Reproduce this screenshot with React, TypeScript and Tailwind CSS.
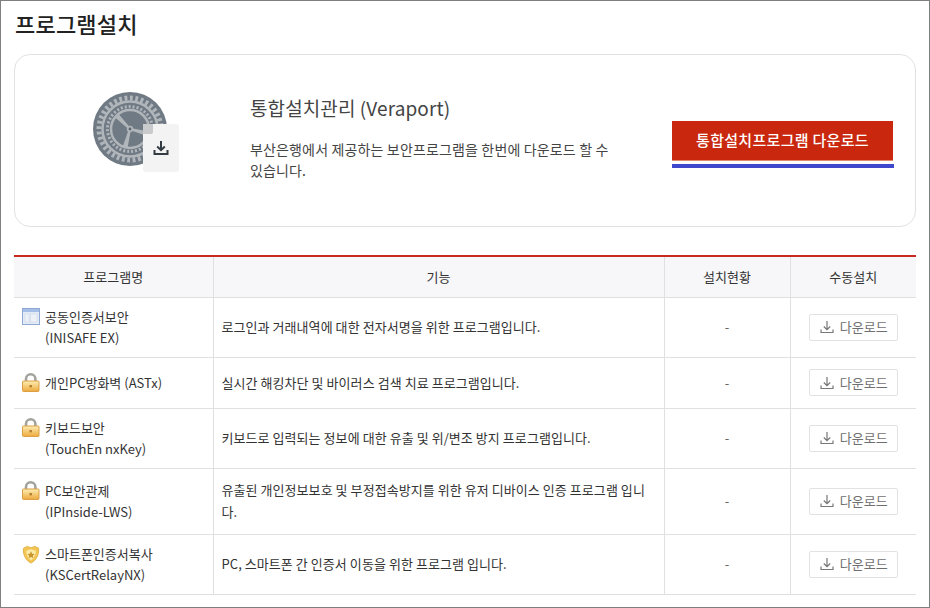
const FONT = "font-['Noto_Sans_CJK_KR','Noto_Sans',sans-serif]"

function WindowIcon() {
  return (
    <svg width="18" height="17" viewBox="0 0 18 17" className="shrink-0">
      <rect x="0.5" y="0.5" width="17" height="16" fill="#e3ebf7" stroke="#8fa9d4" />
      <rect x="1" y="1" width="16" height="3" fill="#a3bfe8" />
      <rect x="3" y="6" width="4" height="8" fill="#eef2f8" stroke="#cdd6e4" strokeWidth="0.6" />
      <rect x="8.5" y="6" width="6.5" height="8" fill="#eef2f8" stroke="#cdd6e4" strokeWidth="0.6" />
    </svg>
  )
}

function LockIcon() {
  return (
    <svg width="18" height="19" viewBox="0 0 18 19" className="shrink-0">
      <defs>
        <linearGradient id="lockBody" x1="0" y1="0" x2="0" y2="1">
          <stop offset="0" stopColor="#fdeeb4" />
          <stop offset="1" stopColor="#eda93c" />
        </linearGradient>
      </defs>
      <path d="M4 9V6a4.7 4.7 0 0 1 9.4 0V9" fill="none" stroke="#a3a39d" strokeWidth="2.6" />
      <rect x="0.5" y="8" width="16.5" height="10.5" rx="1" fill="url(#lockBody)" stroke="#dc9f45" />
      <rect x="7.5" y="12" width="2.4" height="2.4" fill="#b27c2c" />
    </svg>
  )
}

function ShieldIcon() {
  return (
    <svg width="18" height="19" viewBox="0 0 18 20" className="shrink-0">
      <path d="M1 3.5 5 1.5 9 3 13 1.5 17 3.5C17.5 11 14 16.5 9 19 4 16.5.5 11 1 3.5Z" fill="#f3c653" stroke="#e0b043" />
      <path d="M4 6 9 4.5 14 6C14 11 12 14 9 16 6 14 4 11 4 6Z" fill="#fbeaa8" />
      <path d="M9 6.5 10.2 9.2 13 9.5 10.9 11.3 11.5 14 9 12.6 6.5 14 7.1 11.3 5 9.5 7.8 9.2Z" fill="#c9962f" />
    </svg>
  )
}

function GearGraphic() {
  return (
    <div className="relative w-[86px] h-[100px] shrink-0">
      <svg width="74" height="74" viewBox="0 0 74 74" className="mt-[2px]">
        <circle cx="37" cy="37" r="37" fill="#707a84" />
        <circle cx="37" cy="37" r="31" fill="none" stroke="#b1b6bb" strokeWidth="5" strokeDasharray="2.8 2.6" />
        <circle cx="37" cy="37" r="27.5" fill="none" stroke="#b1b6bb" strokeWidth="2.5" />
        <circle cx="37" cy="37" r="22.5" fill="none" stroke="#b1b6bb" strokeWidth="3" strokeDasharray="2 2" />
        <circle cx="37" cy="37" r="19" fill="#707a84" stroke="#b1b6bb" strokeWidth="2.5" />
        <g fill="#b1b6bb">
          <path d="M36 37 34.5 18H39.5L38 37Z" transform="rotate(-45 37 37)" />
          <path d="M36 37 34.5 18H39.5L38 37Z" transform="rotate(105 37 37)" />
          <path d="M36 37 34.5 18H39.5L38 37Z" transform="rotate(195 37 37)" />
          <circle cx="37" cy="37" r="3.2" />
        </g>
        <circle cx="37" cy="37" r="1.4" fill="#5c656e" />
      </svg>
      <div className="absolute left-[50px] top-[32px] w-[36px] h-[48px] bg-[#f3f3f3] rounded-[3px] flex items-center justify-center">
        <div className="absolute left-0 top-0 w-[10px] h-[10px] bg-[#c8cacc] rounded-br-[2px]" />
        <svg width="18" height="18" viewBox="0 0 18 18" fill="none" stroke="#333a42" strokeWidth="2">
          <path d="M9 2v9M5.2 7.5 9 11.2l3.8-3.7" />
          <path d="M2.5 11v4h13v-4" />
        </svg>
      </div>
    </div>
  )
}

const ROWS = [
  { icon: 'window', name: ['공동인증서보안', '(INISAFE EX)'], desc: '로그인과 거래내역에 대한 전자서명을 위한 프로그램입니다.', h: 'h-[60px]' },
  { icon: 'lock', name: ['개인PC방화벽 (ASTx)'], desc: '실시간 해킹차단 및 바이러스 검색 치료 프로그램입니다.', h: 'h-[51px]' },
  { icon: 'lock', name: ['키보드보안', '(TouchEn nxKey)'], desc: '키보드로 입력되는 정보에 대한 유출 및 위/변조 방지 프로그램입니다.', h: 'h-[60px]' },
  { icon: 'lock', name: ['PC보안관제', '(IPInside-LWS)'], desc: '유출된 개인정보보호 및 부정접속방지를 위한 유저 디바이스 인증 프로그램 입니다.', h: 'h-[66px]' },
  { icon: 'shield', name: ['스마트폰인증서복사', '(KSCertRelayNX)'], desc: 'PC, 스마트폰 간 인증서 이동을 위한 프로그램 입니다.', h: 'h-[60px]' },
]

export default function App() {
  return (
    <div className={`${FONT} w-[930px] h-[608px] overflow-hidden bg-white border border-[#7f7f7f] px-[13px] text-[#333]`}>
      <h1 className="text-[22px] leading-[32px] font-medium text-[#222] mt-[6px] ml-[1px] tracking-[0.2px]">프로그램설치</h1>

      <section className="mt-[15px] w-[902px] h-[173px] rounded-[16px] border border-[#e2e2e2] flex items-center">
        <div className="ml-[78px]">
          <GearGraphic />
        </div>
        <div className="ml-[71px] w-[372px] -mt-[6px]">
          <h2 className="text-[19px] leading-[26px] text-[#444] tracking-[0.1px]">통합설치관리 (Veraport)</h2>
          <p className="mt-[18px] text-[14px] leading-[21px] text-[#444] break-keep tracking-[0.15px]">
            부산은행에서 제공하는 보안프로그램을 한번에 다운로드 할 수 있습니다.
          </p>
        </div>
        <div className="ml-[50px] mt-[8px] flex flex-col">
          <button className="w-[221px] h-[40px] bg-[#c9280e] border-b border-b-[#e08a70] text-white text-[15px] tracking-[0.3px] font-medium">
            통합설치프로그램 다운로드
          </button>
          <div className="mt-[3px] w-[222px] h-[4px] bg-[#3f48cc]" />
        </div>
      </section>

      <table className="mt-[28px] w-[902px] table-fixed border-t-2 border-t-[#c9281e] text-[13px] border-collapse">
        <colgroup>
          <col className="w-[199px]" />
          <col className="w-[451px]" />
          <col className="w-[126px]" />
          <col className="w-[126px]" />
        </colgroup>
        <thead>
          <tr className="h-[41px] bg-[#f7f7f9] border-b border-b-[#e0e0e0]">
            <th className="font-normal border-r border-r-[#e0e0e0]">프로그램명</th>
            <th className="font-normal border-r border-r-[#e0e0e0]">기능</th>
            <th className="font-normal border-r border-r-[#e0e0e0]">설치현황</th>
            <th className="font-normal">수동설치</th>
          </tr>
        </thead>
        <tbody>
          {ROWS.map((row) => (
            <tr key={row.name[0]} className={`${row.h} border-b border-b-[#e0e0e0]`}>
              <td className="border-r border-r-[#e0e0e0] pl-[8px] pr-1">
                <div className="flex items-start gap-[5px]">
                  <div className={row.icon === 'lock' ? 'mt-[1px]' : 'mt-[2px]'}>
                    {row.icon === 'window' && <WindowIcon />}
                    {row.icon === 'lock' && <LockIcon />}
                    {row.icon === 'shield' && <ShieldIcon />}
                  </div>
                  <div className="leading-[21px]">
                    {row.name.map((line) => (
                      <div key={line}>{line}</div>
                    ))}
                  </div>
                </div>
              </td>
              <td className="border-r border-r-[#e0e0e0] px-[8px] leading-[22px] tracking-[0.06px]">{row.desc}</td>
              <td className="border-r border-r-[#e0e0e0] text-center text-[#666]">-</td>
              <td className="text-center">
                <button className="inline-flex items-center justify-center gap-[5px] w-[89px] h-[27px] rounded-[2px] border border-[#e2e2e2] text-[#6f6f6f] text-[13px]">
                  <svg width="16" height="16" viewBox="0 0 16 16" fill="none" stroke="#777" strokeWidth="1.2">
                    <path d="M8 2v8.5M4.8 7.5 8 10.7l3.2-3.2" />
                    <path d="M2 10.5v3h12v-3" />
                  </svg>
                  다운로드
                </button>
              </td>
            </tr>
          ))}
        </tbody>
      </table>
    </div>
  )
}
